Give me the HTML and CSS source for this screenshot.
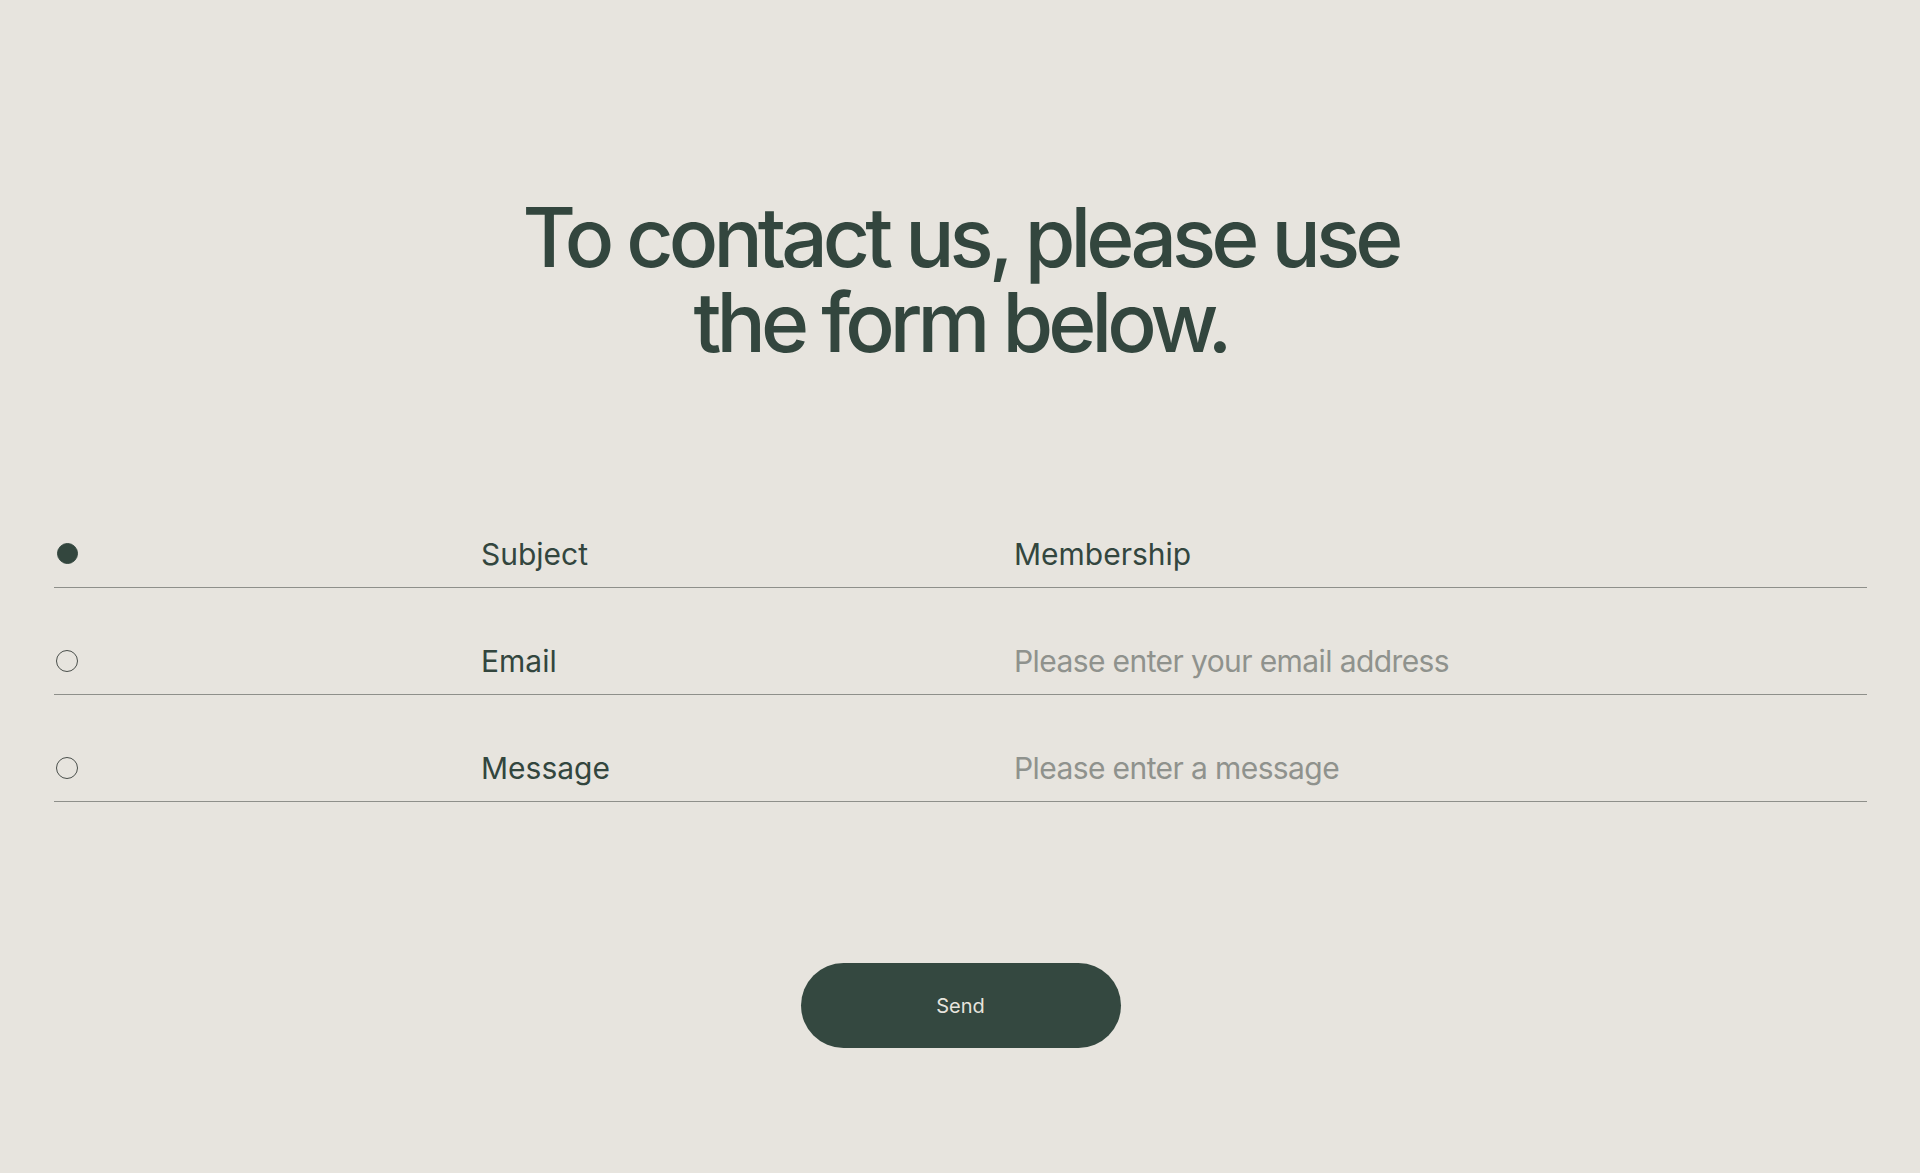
FILE: index.html
```html
<!DOCTYPE html>
<html>
<head>
    <title>Contact</title>
    <link rel="stylesheet" href="styles.css">
</head>
<body>
    <div class="page">
        <h1 class="title">To contact us, please use<br>the form below.</h1>

        <form class="contact-form" id="contactForm">
            <div class="form-row active">
                <span class="step-dot"></span>
                <label class="field-label">Subject</label>
                <div class="field-value">Membership</div>
            </div>

            <div class="form-row">
                <span class="step-dot"></span>
                <label class="field-label" for="email">Email</label>
                <input class="field-input" type="email" id="email" placeholder="Please enter your email address">
            </div>

            <div class="form-row">
                <span class="step-dot"></span>
                <label class="field-label" for="message">Message</label>
                <input class="field-input" type="text" id="message" placeholder="Please enter a message">
            </div>

            <div class="actions">
                <button type="submit" class="send-button">Send</button>
            </div>
        </form>
    </div>
</body>
</html>
```

FILE: styles.css
```css
* {
    margin: 0;
    padding: 0;
    box-sizing: border-box;
    font-family: 'Inter', 'Liberation Sans', sans-serif;
}

body {
    background-color: #e7e4de;
    color: #33463e;
    min-height: 100vh;
}

.page {
    padding: 195px 53px 0 54px;
}

.title {
    font-size: 82px;
    line-height: 85px;
    font-weight: 500;
    letter-spacing: -0.06em;
    text-align: center;
    color: #33463e;
    margin-bottom: 116px;
}

.form-row {
    display: grid;
    grid-template-columns: 427px 533px 1fr;
    align-items: end;
    height: 107px;
    padding-bottom: 15px;
    border-bottom: 1px solid #8e8f8a;
}

.step-dot {
    width: 22px;
    height: 22px;
    margin: 0 0 7px 2px;
    border-radius: 50%;
    border: 1.4px solid #4a4f4b;
}

.form-row.active .step-dot {
    background: #33463e;
    border-color: #33463e;
    width: 21px;
    height: 21px;
    margin-left: 3px;
    margin-bottom: 8px;
}

.field-label,
.field-value,
.field-input {
    font-size: 30px;
    line-height: 36px;
    font-weight: 400;
    letter-spacing: 0;
    color: #33463e;
}

.field-input {
    width: 100%;
    background: transparent;
    border: none;
    outline: none;
}

.field-input::placeholder {
    color: #8f928d;
    letter-spacing: -0.02em;
}

.actions {
    display: flex;
    justify-content: center;
    padding-top: 161px;
}

.send-button {
    width: 320px;
    height: 85px;
    border: none;
    border-radius: 43px;
    background: #344840;
    color: #e7e4de;
    font-size: 20px;
    font-weight: 400;
    cursor: pointer;
}
```
